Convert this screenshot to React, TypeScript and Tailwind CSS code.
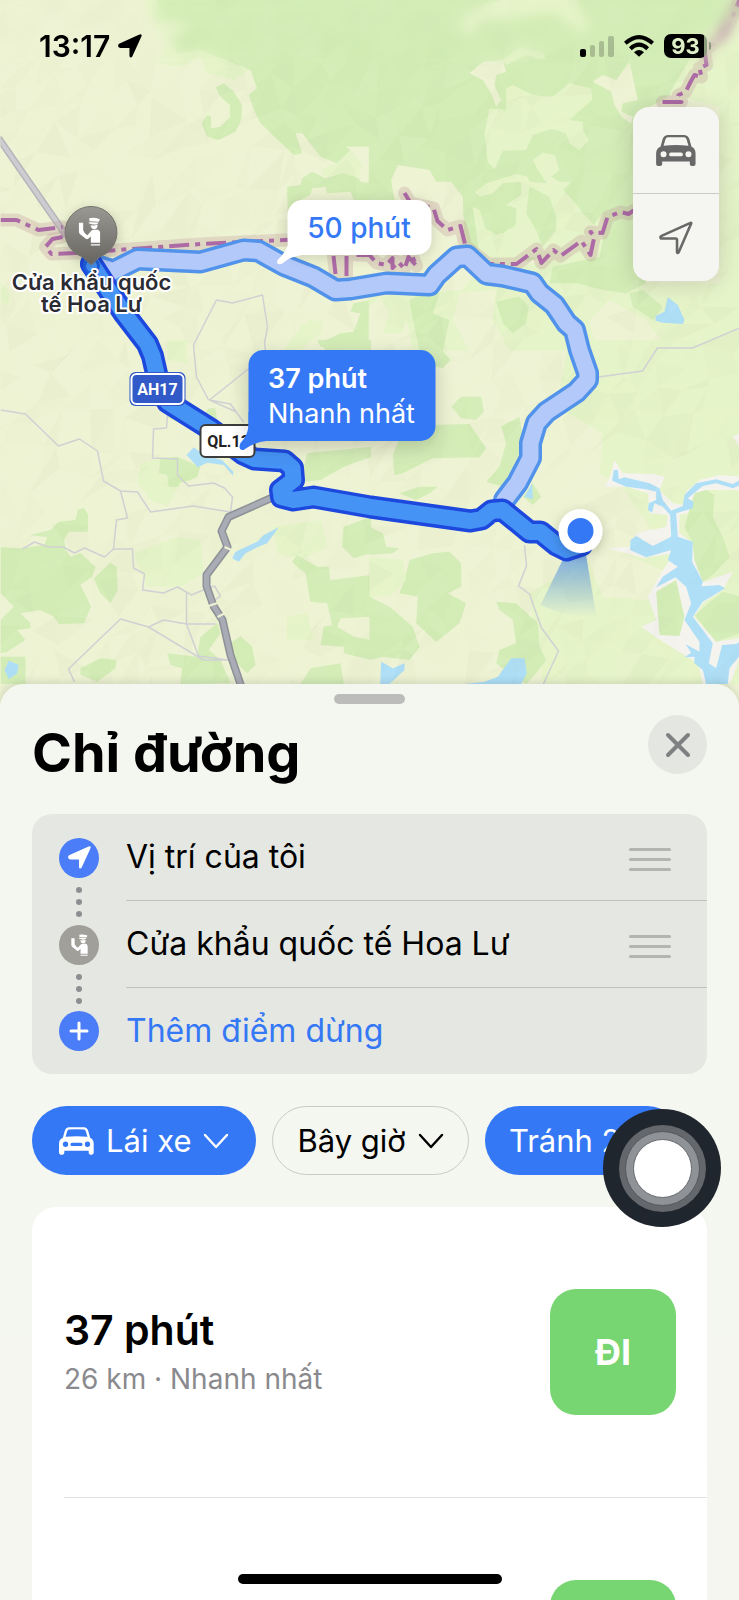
import { useState } from "react";
import clsx from "clsx";

type Area = { fill: string; points: string };

const GREEN = "#d4edb7";
const LIME = "#e6f4c9";
const SAND = "#eef3d4";
const BANK = "#f4f3ee";
const WATER = "#aedff7";

// Land cover, one list per map tile. Tiles use their own 3x coordinates.
const tiles: { id: string; x: number; y: number; areas: Area[] }[] = [
  {
    id: "nw",
    x: 0,
    y: 0,
    areas: [
      { fill: LIME, points: "430,0 450,60 500,130 470,190 540,200 600,170 620,220 700,240 760,200 760,0" },
      { fill: GREEN, points: "470,0 470,60 540,70 570,80 510,115 530,160 600,150 700,190 750,210 770,265 745,285 760,330 780,370 880,465 905,460 885,400 905,400 960,470 1010,490 1050,450 1035,440 1112,440 1112,0" },
      { fill: GREEN, points: "645,262 670,250 700,275 725,315 722,360 705,395 655,420 620,410 603,370 620,345 632,350 632,385 660,380 690,350 688,315 660,290" },
      { fill: GREEN, points: "860,560 900,555 905,535 935,515 975,535 1030,518 1065,515 1080,545 1112,550 1112,620 1060,600 1050,575 980,580 975,560 935,565 930,585 900,600 890,635 862,640" },
      { fill: LIME, points: "960,510 1010,490 1050,450 1085,495 1075,535 1030,520 975,530" },
      { fill: LIME, points: "900,980 930,960 970,965 960,1000 900,1050 850,1050" },
      { fill: GREEN, points: "1112,900 1060,910 1050,935 1080,940 1060,995 1020,1000 990,1015 955,1025 975,1050 1112,1050" },
      { fill: LIME, points: "0,850 30,880 20,920 0,900" },
      { fill: LIME, points: "500,1030 530,1015 560,1050 500,1050" },
    ],
  },
  {
    id: "ne",
    x: 369,
    y: 0,
    areas: [
      { fill: GREEN, points: "-2,0 1112,0 1112,180 1000,220 880,300 800,340 790,640 700,650 640,720 540,770 440,790 280,740 240,600 130,600 -2,600" },
      { fill: LIME, points: "1112,40 1000,110 900,280 1050,320 1050,850 790,850 790,620 700,640 630,730 540,780 450,800 340,790 280,870 -2,890 -2,1052 1112,1052" },
      { fill: LIME, points: "290,110 280,60 330,20 400,0 620,0 660,80 640,100 560,40 440,50 340,60" },
      { fill: SAND, points: "300,220 340,185 400,180 410,215 380,225 375,255 395,300 380,320 365,280 340,240" },
      { fill: LIME, points: "400,180 450,140 520,160 530,180 470,165 410,195" },
      { fill: LIME, points: "410,265 430,255 490,285 550,290 600,250 665,265 668,300 600,360 640,365 640,390 658,420 630,450 600,430 590,400 545,387 490,405 470,450 400,452 375,508 355,485 345,400 360,325 410,330" },
      { fill: SAND, points: "670,245 700,225 740,240 780,185 805,300 760,310 755,335 790,350 785,370 760,355 735,315 725,275" },
      { fill: SAND, points: "65,540 85,495 180,510 200,545 245,545 280,590 285,740 240,640 150,600 75,600" },
      { fill: LIME, points: "490,480 520,458 555,465 570,510 545,530 540,560 505,510" },
      { fill: LIME, points: "318,575 350,550 440,522 475,530 480,545 530,550 545,530 570,545 605,545 580,570 610,600 640,640 680,680 700,760 560,780 480,770 400,800 330,770 310,620 330,630 350,690 400,700 440,670 440,625 410,615 455,585 455,545 400,550 370,580 330,590" },
      { fill: GREEN, points: "480,560 540,590 560,650 560,690 520,740 500,690 470,640" },
      { fill: GREEN, points: "345,640 400,615 440,630 435,680 380,705 345,680" },
      { fill: GREEN, points: "700,640 790,610 830,850 770,880 700,870 620,850 540,850 550,800 690,770 700,720" },
      { fill: GREEN, points: "380,905 450,890 478,920 470,970 430,1000 400,970" },
      { fill: GREEN, points: "780,880 820,870 880,920 850,960 820,940 790,920" },
      { fill: GREEN, points: "120,900 180,870 210,880 190,940 240,960 220,1052 150,1052 130,960" },
      { fill: SAND, points: "30,890 60,940 40,1000 100,1000 110,950 130,1052 -2,1052 -2,920" },
      { fill: SAND, points: "270,880 380,870 370,960 420,1052 300,1052 250,960" },
      { fill: SAND, points: "660,960 720,900 830,960 900,1052 700,1052 670,1010" },
      { fill: WATER, points: "858,948 885,935 895,892 925,915 945,960 940,972 880,968 858,962" },
    ],
  },
  {
    id: "sw",
    x: 0,
    y: 340,
    areas: [
      { fill: LIME, points: "500,0 560,0 560,70 500,60" },
      { fill: GREEN, points: "950,0 1112,0 1112,60 1030,50 1000,20 960,20" },
      { fill: LIME, points: "420,370 500,350 540,430 500,500 450,480 410,430" },
      { fill: GREEN, points: "480,355 530,350 600,380 590,410 570,420 535,430 535,440 505,440 500,405 475,400" },
      { fill: GREEN, points: "625,205 645,205 650,240 670,255 600,260 530,245 500,230 520,215 600,235" },
      { fill: GREEN, points: "920,340 1112,320 1112,350 1030,380 960,420 915,425 910,380" },
      { fill: GREEN, points: "88,585 150,570 175,545 225,540 232,510 250,503 263,525 262,575 205,575 190,600 195,620 130,618 140,592" },
      { fill: GREEN, points: "0,622 60,625 130,615 190,620 210,650 240,640 285,680 275,710 240,735 272,800 250,850 175,852 160,830 120,810 60,820 90,850 90,865 50,870 75,900 20,935 0,940 0,840 40,800 0,760" },
      { fill: GREEN, points: "280,715 330,668 348,680 352,750 330,790 300,760" },
      { fill: LIME, points: "400,640 530,590 600,600 610,700 540,740 440,740" },
      { fill: GREEN, points: "240,985 300,955 348,960 345,985 290,1025 240,1005" },
      { fill: GREEN, points: "500,940 590,950 600,890 650,850 660,880 625,930 660,960 690,1030 540,1032 545,985 510,975" },
      { fill: GREEN, points: "690,910 720,888 755,920 765,975 740,1000 700,960" },
      { fill: GREEN, points: "0,950 75,950 75,1032 0,1032" },
      { fill: LIME, points: "820,560 960,540 980,620 900,660 830,640" },
      { fill: GREEN, points: "1030,560 1112,530 1112,640 1060,655 1025,620" },
      { fill: GREEN, points: "875,665 890,645 950,680 985,680 990,720 1112,705 1112,830 1020,835 1010,860 1060,890 1112,900 1112,960 1030,940 1030,920 960,915 970,860 995,855 980,790 930,785 915,700 890,680" },
      { fill: LIME, points: "860,830 920,820 940,900 860,900" },
      { fill: GREEN, points: "900,1032 930,985 1020,970 1030,1032" },
      { fill: WATER, points: "558,345 580,322 610,345 665,360 698,395 698,407 670,375 620,368 592,382" },
      { fill: WATER, points: "695,655 705,635 770,605 790,585 835,562 800,610 770,622 735,640 715,665" },
      { fill: WATER, points: "12,990 25,962 55,975 50,1000 25,1018" },
    ],
  },
  {
    id: "se",
    x: 369,
    y: 340,
    areas: [
      { fill: LIME, points: "600,0 1112,0 1112,1032 520,1032 480,760 680,640 600,450 700,280 560,200" },
      { fill: SAND, points: "520,260 600,230 700,300 690,400 760,440 860,590 760,640 900,700 830,780 700,770 640,620 560,500" },
      { fill: GREEN, points: "170,0 210,20 243,60 220,85 150,70" },
      { fill: GREEN, points: "245,200 275,170 335,170 343,215 320,240 275,235" },
      { fill: GREEN, points: "70,345 100,270 190,255 300,252 350,325 330,352 190,355 100,400 75,405" },
      { fill: GREEN, points: "395,260 450,230 460,290 450,340 400,440 350,425 390,380 410,310" },
      { fill: GREEN, points: "90,460 150,440 205,440 180,460 140,480" },
      { fill: GREEN, points: "460,470 490,430 515,470 490,495" },
      { fill: GREEN, points: "0,560 40,580 50,620 90,625 70,640 0,645" },
      { fill: GREEN, points: "105,720 120,660 190,640 240,635 275,670 275,740 235,760 290,790 270,850 200,905 140,850 145,770 90,760" },
      { fill: LIME, points: "0,650 100,660 110,720 60,770 0,770" },
      { fill: GREEN, points: "0,770 60,800 130,860 150,920 120,960 40,950 0,960" },
      { fill: GREEN, points: "380,785 440,790 505,850 510,920 530,960 500,1000 470,1032 420,1000 380,970 390,930 440,910 430,840 390,810" },
      { fill: BANK, points: "735,360 760,400 850,402 885,410 870,450 910,490 945,495 950,455 990,420 1050,405 1112,410 1112,450 1010,450 975,490 970,515 930,525 930,580 970,610 975,660 1005,725 1090,695 1060,750 1000,790 975,830 1040,905 1110,895 1112,950 1090,1010 1080,1032 1000,1032 985,970 880,905 815,860 860,840 835,770 880,690 915,640 820,655 715,625 780,620 800,580 890,560 895,525 840,520 835,460 770,440 708,440 725,400" },
      { fill: BANK, points: "1090,290 1112,278 1112,325" },
      { fill: GREEN, points: "945,560 975,460 1010,450 1035,465 1030,530 1060,590 1080,650 1035,700 1000,725 975,660 970,610" },
      { fill: GREEN, points: "860,755 920,720 945,830 930,888 870,885" },
      { fill: GREEN, points: "975,825 1060,755 1112,770 1112,880 1040,905" },
      { fill: WATER, points: "733,390 728,422 770,440 830,448 860,455 860,480 838,490 835,510 848,518 855,490 880,500 902,525 905,590 850,618 800,588 783,600 782,630 830,652 905,630 895,660 925,680 880,710 860,742 918,712 950,740 965,790 945,840 990,905 990,935 948,912 965,938 945,952 975,950 975,970 1000,990 1010,1032 1075,1032 1080,985 1112,945 1112,905 1100,912 1058,915 1040,985 1018,970 1030,910 970,830 1000,785 1067,745 1050,735 980,740 990,760 1000,725 968,665 970,605 925,590 920,520 970,505 972,485 955,475 1000,438 1040,430 1090,445 1112,435 1112,420 1090,432 1040,418 980,430 945,465 940,498 905,512 880,480 870,445 840,430 765,412 748,418 745,390" },
      { fill: WATER, points: "35,965 70,985 105,970 105,990 60,1032 32,1032" },
      { fill: WATER, points: "345,1025 385,1010 425,955 465,955 472,1000 455,1032 285,1032" },
      { fill: WATER, points: "465,470 488,430 490,478" },
    ],
  },
];

const minorRoads = [
  "M0 410L25 414 58 446 79 439 97 451 103 481 120 491 137 492 150 512 193 506 230 512 232 497 224 488 213 483 188 486 177 475 177 459 152 458 153 429 166 428 167 415",
  "M120 491L127 518 116 520 113 549 104 557 84 548 74 553 63 547 48 547 34 542 22 549",
  "M113 549H132L133 568 144 574 142 590 163 593 177 587 191 595 205 589 214 586 220 596 213 601",
  "M186 592V624L198 656 227 660 203 660 148 627",
  "M74 682L68 669 120 619 148 627 163 620 186 624H215",
  "M208 400L196 377 193 345 216 300 232 303 262 295 267 327 264 343 265 350",
  "M249 368L209 400 230 404 243 422M209 400L236 412",
  "M598 377L642 371 657 348H692L739 328",
  "M524 545L526 566 518 586 529 594 541 628 558 651 542 686",
];

const borderLines = [
  "M0 220H16L38 230 62 227",
  "M62 237L52 239 45 247 51 254 75 253 117 250 200 244 283 240 420 234",
  "M404 193L410 203 433 208 437 221 447 230 460 226 465 246 488 264 516 264 536 249 541 263 553 250 560 256 581 241 590 255 594 236 590 232 602 233 607 217 620 212 628 214 640 206",
  "M333 256L335 274M346 256V277M356 255L369 255 376 263 386 265 392 258 392 268 398 262 404 269 408 257 416 266 410 252",
  "M662 102H681L678 95 685 92 690 82 694 75 701 77 699 68 706 65 704 50 720 38 730 20 739 0",
];

const fastRoute =
  "M91 264L108 290 124 314 147 344 152 356 157 378 167 402 210 429 243 454 254 459 284 461 292 468 293 480 280 490 281 497 293 500 313 497 370 507 470 521 481 519 491 511 502 510 529 532 540 532 556 545 566 550 581 545";
const slowRoute =
  "M91 264L113 271 137 259 200 262 243 250 258 251 283 265 313 277 335 290 350 289 386 283 429 285 436 275 456 257 467 256 486 274 502 276 532 283 539 293 554 305 566 323 574 330 579 350 587 373V380L576 392 546 412 536 423 530 443V458L517 483 504 500";

// Soft triangular shading that gives the terrain its relief
function buildFacets() {
  let seed = 17;
  const rand = () => {
    seed = (seed * 16807) % 2147483647;
    return seed / 2147483647;
  };
  const size = 24;
  const cols = 33;
  const rows = 31;
  const grid = Array.from({ length: rows }, (_, r) =>
    Array.from({ length: cols }, (_, c) => [
      Math.round((c - 0.5) * size + (rand() - 0.5) * 20),
      Math.round((r - 0.5) * size + (rand() - 0.5) * 24),
    ])
  );
  const facets: { points: string; fill: string; opacity: number }[] = [];
  for (let r = 0; r < rows - 1; r++) {
    for (let c = 0; c < cols - 1; c++) {
      const a = grid[r][c];
      const b = grid[r][c + 1];
      const d = grid[r + 1][c];
      const e = grid[r + 1][c + 1];
      for (const tri of [
        [a, b, d],
        [b, e, d],
      ]) {
        const shade = rand();
        facets.push({
          points: tri.map((p) => p.join(",")).join(" "),
          fill: shade > 0.5 ? "#8f9a6a" : "#ffffff",
          opacity: shade > 0.5 ? (shade - 0.5) * 0.08 : shade * 0.08,
        });
      }
    }
  }
  return facets;
}

const facets = buildFacets();

function CarIcon({ className }: { className?: string }) {
  return (
    <svg viewBox="0 0 118 92" fill="currentColor" fillRule="evenodd" className={className} aria-hidden>
      <path d="M13 35L19 13Q23 1 34 0Q59-1 84 0Q95 1 99 13L105 35Q117 40 117 55V86Q117 92 111 92H106Q100 92 100 86V79H18V86Q18 92 12 92H6Q0 92 0 86V55Q0 40 13 35ZM22 32Q59 28 96 32L90 12Q88 7 83 7Q59 6 35 7Q30 7 28 12ZM22 48A9 9 0 1 0 22 66A9 9 0 1 0 22 48ZM96 48A9 9 0 1 0 96 66A9 9 0 1 0 96 48ZM44 52A5 5 0 0 0 44 63H74A5 5 0 0 0 74 52Z" />
    </svg>
  );
}

function LocationArrow({ className, outline }: { className?: string; outline?: boolean }) {
  return (
    <svg
      viewBox="0 0 66 66"
      fill={outline ? "none" : "currentColor"}
      stroke="currentColor"
      strokeWidth={5}
      strokeLinejoin="round"
      className={className}
      aria-hidden
    >
      <path d={outline ? "M4 34Q1 31 5 29L60 4Q64 2 62 6L38 61Q35 64 35 60V37Q35 34 32 34Z" : "M4 29L60 4Q64 2 62 6L37 61Q34 64 34 60V39Q34 36 31 36L6 36Q1 33 4 29Z"} />
    </svg>
  );
}

function OfficerIcon({ className }: { className?: string }) {
  return (
    <svg viewBox="0 0 66 86" fill="currentColor" className={className} aria-hidden>
      <path d="M32 3Q46-1 64 6L61 14L33 12Z" />
      <path d="M31 15L60 16L56 21Q44 24 31 18Z" />
      <path d="M36 24Q46 26 57 23Q58 36 48 36Q38 36 36 24Z" />
      <path d="M1 17H14V39L19 48L27 54L37 42Q40 38 48 38H58Q65 40 65 50V77H37V58L29 65Q25 68 21 64L5 51Q1 48 1 42Z" />
      <path d="M37 81H65V85H37Z" />
    </svg>
  );
}

function Chevron() {
  return (
    <svg
      viewBox="0 0 26 16"
      fill="none"
      stroke="currentColor"
      strokeWidth={2.4}
      strokeLinecap="round"
      strokeLinejoin="round"
      className="h-4 w-[26px] shrink-0"
      aria-hidden
    >
      <path d="M2 2L13 14L24 2" />
    </svg>
  );
}

function RoutesMap() {
  return (
    <svg viewBox="0 0 739 712" className="block h-[712px] w-[739px]" role="img" aria-label="Bản đồ tuyến đường">
      <defs>
        <linearGradient id="cone" x1="0" y1="0" x2="0" y2="1">
          <stop offset="0" stopColor="#4a8de0" stopOpacity="0.85" />
          <stop offset="1" stopColor="#4a8de0" stopOpacity="0" />
        </linearGradient>
        <linearGradient id="pin" x1="0" y1="0" x2="0" y2="1">
          <stop offset="0" stopColor="#9a9893" />
          <stop offset="1" stopColor="#66645f" />
        </linearGradient>
        <filter id="drop" x="-50%" y="-50%" width="200%" height="200%">
          <feDropShadow dx="0" dy="3" stdDeviation="6" floodOpacity="0.2" />
        </filter>
      </defs>
      <rect width="739" height="712" fill={SAND} />
      {tiles.map((tile) => (
        <g key={tile.id} transform={`translate(${tile.x} ${tile.y}) scale(0.3333)`}>
          {tile.areas.map((area) => (
            <polygon key={area.points} points={area.points} fill={area.fill} />
          ))}
        </g>
      ))}
      <g>
        {facets.map((f) => (
          <polygon key={f.points} points={f.points} fill={f.fill} fillOpacity={f.opacity} />
        ))}
      </g>

      <g fill="none" stroke="#cfd1d3" strokeWidth="1.5" strokeLinejoin="round">
        {minorRoads.map((d) => (
          <path key={d} d={d} />
        ))}
      </g>
      <g fill="none" strokeLinejoin="round">
        <path d="M-2 138L66 236" stroke="#b3b4ba" strokeWidth="7" />
        <path d="M-2 138L66 236" stroke="#cdcdd1" strokeWidth="4" />
        <path d="M273 497L228 517 221 531 227 547 206 575V586L213 606 222 620 230 655 242 690" stroke="#8e9197" strokeWidth="8" />
        <path d="M273 497L228 517 221 531 227 547 206 575V586L213 606 222 620 230 655 242 690" stroke="#a9abb5" strokeWidth="5" />
        <path d="M208 606L217 603M217 617L225 613M224 547L231 550" stroke="#eef3d4" strokeWidth="2" />
      </g>
      <g fill="none" strokeLinejoin="round">
        {borderLines.map((d) => (
          <path key={d} d={d} stroke="#c09a9c" strokeOpacity="0.3" strokeWidth="13" strokeLinecap="round" />
        ))}
        {borderLines.map((d) => (
          <path key={d} d={d} stroke="#ad6ba6" strokeWidth="4" strokeDasharray="20 6 5 6" />
        ))}
      </g>

      <g fill="none" strokeLinejoin="round" strokeLinecap="round">
        <path d={slowRoute} stroke="#5192ea" strokeWidth="23" />
        <path d={slowRoute} stroke="#b3c9fa" strokeWidth="16" />
      </g>
      <path d="M572 540L540 605Q566 618 596 617L583 540Z" fill="url(#cone)" />
      <g fill="none" strokeLinejoin="round" strokeLinecap="round">
        <path d={fastRoute} stroke="#1d48de" strokeWidth="23" />
        <path d={fastRoute} stroke="#4593f5" strokeWidth="16" />
        <circle cx="91" cy="266" r="7" stroke="#1d5fe0" strokeWidth="3" />
      </g>

      <circle cx="580" cy="531" r="22" fill="#fff" filter="url(#drop)" />
      <circle cx="580" cy="531" r="13" fill="#3478f6" />

      <g fontFamily="'Liberation Sans Narrow', 'Roboto', sans-serif" fontWeight="700" fontSize="16" textAnchor="middle">
        <rect x="129" y="372" width="56" height="34" rx="6" fill="#3159c8" />
        <rect x="131" y="374" width="52" height="30" rx="5" fill="#3159c8" stroke="#fff" strokeWidth="2" />
        <text x="157" y="395" fill="#fff">AH17</text>
        <rect x="200" y="425" width="54" height="32" rx="5" fill="#fff" stroke="#3c3c3c" strokeWidth="2" />
        <text x="228" y="447" fill="#222">QL.13</text>
      </g>

      <g filter="url(#drop)">
        <path d="M91 265L82 257A26 26 0 1 1 99 257Z" fill="url(#pin)" stroke="#75736e" strokeWidth="1" />
      </g>
      <g
        fontFamily="Inter, sans-serif"
        fontWeight="600"
        fontSize="22"
        textAnchor="middle"
        fill="#2b2c33"
        stroke="#fff"
        strokeWidth="4"
        strokeLinejoin="round"
        paintOrder="stroke"
      >
        <text x="91" y="290">Cửa khẩu quốc</text>
        <text x="91" y="312">tế Hoa Lư</text>
      </g>
    </svg>
  );
}

function MapPins() {
  return (
    <>
      <OfficerIcon className="absolute left-[78px] top-[217px] h-[29px] w-[22px] text-white" />
      <button
        type="button"
        className="absolute left-[287px] top-[200px] flex h-[55px] w-[144px] items-center justify-center rounded-[15px] bg-white text-[28px] font-medium text-[#3478f6] shadow-[0_2px_14px_rgba(0,0,0,0.15)]"
      >
        <svg viewBox="0 0 40 34" className="absolute -left-[11px] top-[34px] h-[34px] w-10" fill="#fff" aria-hidden>
          <path d="M12 0L11 12Q8 20 1 26Q-1 31 5 30Q14 22 26 21H34Z" />
        </svg>
        <span className="relative">50 phút</span>
      </button>
      <button
        type="button"
        className="absolute left-[248px] top-[350px] flex h-[91px] w-[187px] flex-col justify-center rounded-[15px] bg-[#3478f6] pl-5 text-left text-[27px] leading-[35px] text-white shadow-[0_6px_20px_rgba(0,0,0,0.18)]"
      >
        <svg viewBox="0 0 40 40" className="absolute -left-[10px] top-[62px] h-10 w-10" fill="#3478f6" aria-hidden>
          <path d="M10 0V14Q9 24 2 31Q-1 38 5 38Q16 30 28 29H38Z" />
        </svg>
        <span className="relative font-semibold">37 phút</span>
        <span className="relative">Nhanh nhất</span>
      </button>
    </>
  );
}

function StatusBar() {
  return (
    <header className="absolute inset-x-0 top-0 flex items-center justify-between pl-[39px] pr-7 pt-7 text-black">
      <div className="flex items-center gap-2">
        <span className="text-[30px] font-semibold leading-9">13:17</span>
        <LocationArrow className="size-6" />
      </div>
      <div className="flex items-center gap-[10px]">
        <svg viewBox="0 0 34 21" className="h-[21px] w-[34px]" aria-hidden>
          <rect x="0" y="13" width="6" height="8" rx="2" />
          <rect x="10" y="9" width="5" height="12" rx="2" opacity="0.2" />
          <rect x="19" y="5" width="5" height="16" rx="2" opacity="0.2" />
          <rect x="28" y="0" width="6" height="21" rx="2" opacity="0.2" />
        </svg>
        <svg viewBox="0 0 90 66" className="h-[22px] w-[30px]" fill="none" stroke="currentColor" strokeWidth="12" aria-hidden>
          <path d="M4 25Q45-12 86 25" />
          <path d="M19 41Q45 17 71 41" />
          <path d="M45 65L30 52Q45 38 60 52Z" fill="currentColor" stroke="none" />
        </svg>
        <div className="flex items-center gap-[2px]">
          <span className="flex h-6 w-[43px] items-center justify-center rounded-[7px] bg-linear-to-r from-black from-93% to-[#8b9b7c] to-93% text-[22px] font-bold leading-6 text-[#dff0c8]">
            93
          </span>
          <span className="h-2 w-[2px] rounded-r-full bg-[#8b9b7c]" />
        </div>
      </div>
    </header>
  );
}

const stops = [
  { id: "me", name: "Vị trí của tôi", kind: "me" },
  { id: "hoa-lu", name: "Cửa khẩu quốc tế Hoa Lư", kind: "place" },
  { id: "add", name: "Thêm điểm dừng", kind: "add" },
] as const;

function StopIcon({ kind }: { kind: "me" | "place" | "add" }) {
  return (
    <span
      className={clsx(
        "flex size-10 shrink-0 items-center justify-center rounded-full text-white",
        kind === "place" ? "bg-[#a09f9a]" : "bg-[#4a7df7]"
      )}
    >
      {kind === "me" && <LocationArrow className="size-[23px]" />}
      {kind === "place" && <OfficerIcon className="h-[22px] w-[17px]" />}
      {kind === "add" && (
        <svg viewBox="0 0 20 20" className="size-5" stroke="currentColor" strokeWidth={3} strokeLinecap="round" aria-hidden>
          <path d="M10 2V18M2 10H18" />
        </svg>
      )}
    </span>
  );
}

function StopList() {
  return (
    <ul className="mx-8 rounded-[20px] bg-[#e5e7e2]">
      {stops.map((stop, i) => (
        <li key={stop.id} className="relative flex items-center pl-[27px]">
          <StopIcon kind={stop.kind} />
          <div
            className={clsx(
              "ml-[27px] flex flex-1 items-center justify-between pr-9",
              i < stops.length - 1 ? "h-[87px] border-b border-[#bfc1bd]" : "h-[86px]"
            )}
          >
            {stop.kind === "add" ? (
              <button type="button" className="text-[32px] leading-10 text-[#3478f6]">
                {stop.name}
              </button>
            ) : (
              <>
                <span className="text-[32px] leading-10">{stop.name}</span>
                <button type="button" aria-label={`Di chuyển ${stop.name}`} className="flex flex-col gap-[7px] pt-1">
                  <span className="h-[3px] w-[42px] rounded-full bg-[#b3b5b2]" />
                  <span className="h-[3px] w-[42px] rounded-full bg-[#b3b5b2]" />
                  <span className="h-[3px] w-[42px] rounded-full bg-[#b3b5b2]" />
                </button>
              </>
            )}
          </div>
          {i < stops.length - 1 && (
            <span className="absolute -bottom-4 left-11 flex flex-col gap-[6px]" aria-hidden>
              <span className="size-[6px] rounded-full bg-[#8e8e92]" />
              <span className="size-[6px] rounded-full bg-[#8e8e92]" />
              <span className="size-[6px] rounded-full bg-[#8e8e92]" />
            </span>
          )}
        </li>
      ))}
    </ul>
  );
}

type Route = { id: string; time?: string; detail?: string };

// A route without a time is still being calculated
const routes: Route[] = [
  { id: "fast", time: "37 phút", detail: "26 km · Nhanh nhất" },
  { id: "slow" },
];

export default function App() {
  const [open, setOpen] = useState(true);

  return (
    <main className="relative flex h-screen flex-col overflow-hidden bg-[#f5f6f0] font-['Inter',sans-serif] text-black">
      <section className="relative h-[712px] shrink-0 overflow-hidden bg-[#eef3d4]">
        <div className="absolute left-1/2 top-0 w-[739px] -translate-x-1/2">
          <RoutesMap />
          <MapPins />
        </div>
        <div className="pointer-events-none absolute inset-x-0 top-0 h-[70px] backdrop-blur-[6px] [mask-image:linear-gradient(black_60%,transparent)]" />
        <StatusBar />
        <div className="absolute right-5 top-[107px] flex w-[86px] flex-col overflow-hidden rounded-2xl bg-[#f5f6f1] text-[#686868] shadow-[0_2px_24px_rgba(0,0,0,0.16)]">
          <button type="button" aria-label="Chế độ bản đồ" className="flex h-[87px] items-center justify-center border-b border-[#c9cbc6]">
            <CarIcon className="h-[31px] w-10" />
          </button>
          <button type="button" aria-label="Vị trí hiện tại" className="flex h-[87px] items-center justify-center">
            <LocationArrow outline className="size-[34px]" />
          </button>
        </div>
      </section>

      {open && (
        <section className="relative -mt-7 flex flex-1 flex-col rounded-t-[24px] bg-linear-to-b from-[#f4f7f0] to-[#f5f6f0] shadow-[0_-2px_8px_rgba(0,0,0,0.12)]">
          <div className="mx-auto mt-[10px] h-[10px] w-[71px] rounded-full bg-[#bcbdba]" />
          <div className="flex items-start justify-between px-8 pt-[11px]">
            <h1 className="pt-1 text-[54px] font-bold leading-[68px]">Chỉ đường</h1>
            <button
              type="button"
              aria-label="Đóng"
              onClick={() => setOpen(false)}
              className="flex size-[59px] items-center justify-center rounded-full bg-[#e4e6e2] text-[#7f8082]"
            >
              <svg viewBox="0 0 26 26" className="size-[26px]" stroke="currentColor" strokeWidth={4} strokeLinecap="round" aria-hidden>
                <path d="M3 3L23 23M23 3L3 23" />
              </svg>
            </button>
          </div>

          <div className="mt-[27px]">
            <StopList />
          </div>

          <div className="mt-8 flex gap-4 overflow-hidden pl-8 text-[31px] leading-10">
            <button type="button" className="flex h-[69px] shrink-0 items-center gap-3 rounded-full bg-[#3478f6] px-[27px] text-white">
              <CarIcon className="h-7 w-[35px]" />
              Lái xe
              <Chevron />
            </button>
            <button type="button" className="flex h-[69px] shrink-0 items-center gap-3 rounded-full border border-[#c8cac8] px-6">
              Bây giờ
              <Chevron />
            </button>
            <button type="button" className="flex h-[69px] shrink-0 items-center gap-3 rounded-full bg-[#3478f6] px-6 text-white">
              Tránh 2
              <Chevron />
            </button>
          </div>

          <ul className="mx-8 mt-8 flex-1 rounded-t-[24px] bg-white pl-8">
            {routes.map((route) => (
              <li key={route.id} className="flex h-[291px] items-center justify-between border-b border-[#e2e2e4] pr-[31px]">
                <div>
                  {route.time && <p className="text-[41px] font-semibold leading-[54px]">{route.time}</p>}
                  {route.detail && <p className="text-[28px] leading-[44px] text-[#8a8a8e]">{route.detail}</p>}
                </div>
                <button
                  type="button"
                  aria-label="Đi"
                  className="flex size-[126px] shrink-0 items-center justify-center rounded-[26px] bg-[#77d672] text-[36px] font-bold text-white"
                >
                  {route.time && "ĐI"}
                </button>
              </li>
            ))}
          </ul>
        </section>
      )}

      <button
        type="button"
        aria-label="AssistiveTouch"
        className="absolute right-[18px] top-[1109px] flex size-[118px] items-center justify-center rounded-full bg-[#20262e]"
      >
        <span className="flex size-[87px] items-center justify-center rounded-full bg-[#64676b]">
          <span className="flex size-[75px] items-center justify-center rounded-full border border-[#55585c] bg-[#8f9296]">
            <span className="size-[59px] rounded-full border border-[#66696d] bg-white" />
          </span>
        </span>
      </button>
      <div className="absolute bottom-4 left-1/2 h-[10px] w-[264px] -translate-x-1/2 rounded-full bg-black" />
    </main>
  );
}
